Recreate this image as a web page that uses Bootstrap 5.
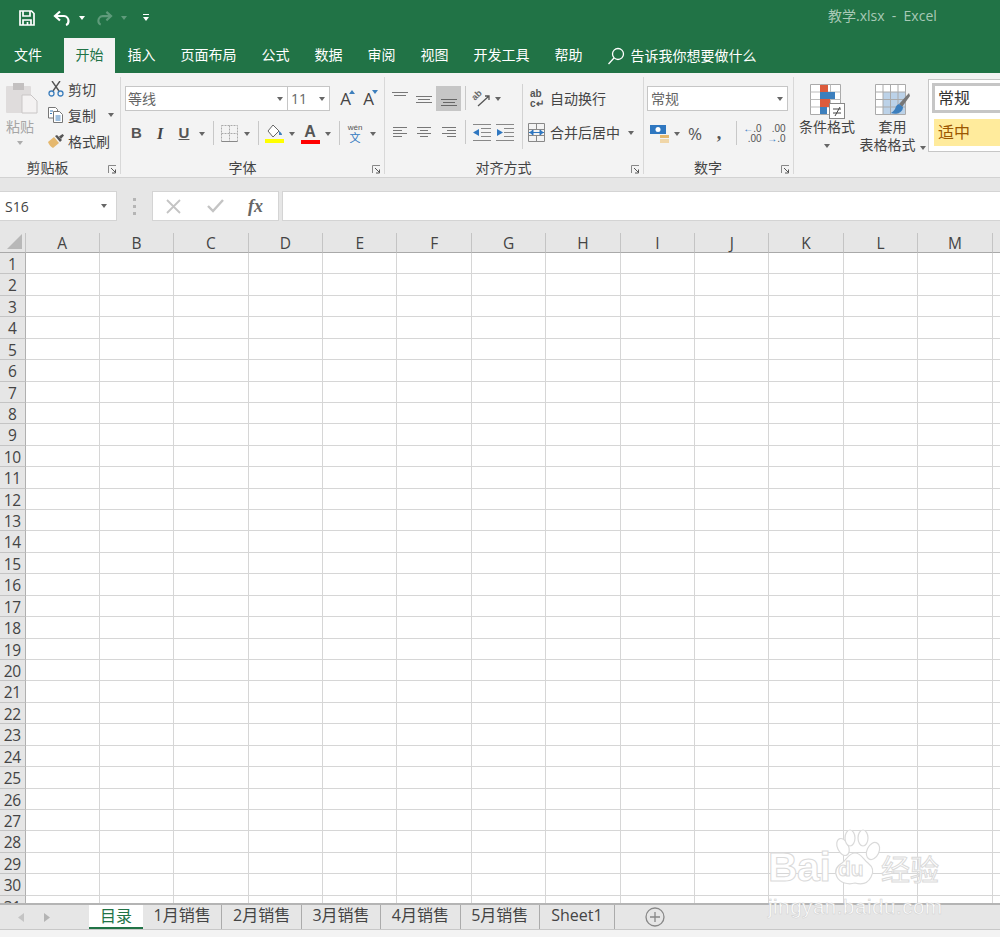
<!DOCTYPE html>
<html lang="zh-CN">
<head>
    <meta charset="UTF-8">
    <title>教学.xlsx - Excel</title>
    <link href="https://cdn.jsdelivr.net/npm/bootstrap@5.3.3/dist/css/bootstrap.min.css" rel="stylesheet">
    <style>
        html, body { margin: 0; height: 937px; overflow: hidden; }
        body { font-family: "Open Sans", "Noto Sans CJK SC", sans-serif; font-size: 14px; color: #444; background: #f3f3f3; position: relative; }
        svg { display: block; flex: none; }

        /* title and tabs */
        .title-bar { height: 38px; background: #217346; color: #fff; padding-bottom: 3px; }
        .qat-gap-1 { margin-left: 19px; }
        .qat-gap-2 { margin-left: 18px; }
        .qat-gap-3 { margin-left: 11px; }
        .qat-gap-4 { margin-left: 16px; }
        .doc-name { margin-left: 679px; margin-bottom: 4px; color: #a8c9b6; font-size: 14px; white-space: pre; }
        .tab-bar { height: 35px; background: #217346; color: #fff; padding-left: 1.5px; }
        .rtab { padding: 0 12.5px; line-height: 34px; white-space: nowrap; }
        .rtab-on { background: #f3f3f3; color: #217346; margin-left: 9.5px; padding: 0 11.5px; }
        .tell-me { margin-left: -1px; gap: 6px; }

        /* ribbon */
        .ribbon { height: 105px; background: #f3f3f3; border-bottom: 1px solid #d2d2d2; }
        .rgroup { position: relative; flex: none; display: flex; flex-direction: column; }
        .rgroup::after { content: ""; position: absolute; right: 0; top: 4px; bottom: 3px; width: 1px; background: #d8d8d8; }
        .g-clip { width: 121px; }
        .g-font { width: 264px; padding-left: 4px; }
        .g-align { width: 259px; padding-left: 3px; }
        .g-num { width: 150px; padding-left: 3px; }
        .g-style { width: 206px; }
        .g-style::after { display: none; }
        .rbody { height: 86px; padding-top: 13px; }
        .rlabel { height: 18px; line-height: 18px; text-align: center; color: #444; padding-right: 25px; }
        .g-clip .rlabel { padding-right: 26px; }
        .launcher { position: absolute; right: 4px; bottom: 3px; }
        .drop-tri { display: inline-block; width: 0; height: 0; border-left: 3.5px solid transparent; border-right: 3.5px solid transparent; border-top: 4px solid #666; }
        .drop-white { border-top-color: #fff; }
        .rcell { display: flex; align-items: center; justify-content: center; height: 25px; }
        .vline { width: 1px; height: 24px; background: #c8c8c8; justify-self: center; }

        .paste-btn { width: 40px; margin-top: -4px; color: #a6a6a6; }
        .paste-btn svg { margin-left: 3px; }
        .paste-word { margin-top: 3px; line-height: 20px; }
        .clip-list { margin-left: 8px; margin-top: -10px; }
        .clip-item { height: 26px; gap: 4px; white-space: nowrap; }
        .clip-arrow { margin-left: 8px; }

        .field { height: 25px; background: #fff; border: 1px solid #c6c6c6; display: flex; align-items: center; justify-content: space-between; padding: 0 4px 0 2px; color: #666; }
        .f-name { width: 163px; }
        .f-size { width: 43px; padding-left: 3px; margin-left: -1px; }
        .f-num { width: 141px; padding-left: 3px; }
        .grow-a { width: 23px; position: relative; font-size: 17px; text-align: center; line-height: 25px; }
        .grow-a svg { position: absolute; right: 2px; top: 4px; }
        .row-two { margin-top: 10px; }
        .font-tools { display: grid; grid-template-columns: 23px 24px 24px 12px 10px 23px 12px 10px 23px 12px 24px 12px 10px 22px 14px; }
        .tool-b { font-family: "Liberation Sans", sans-serif; font-size: 15px; font-weight: 700; color: #555; }
        .tool-i { font-family: "Liberation Serif", serif; font-style: italic; font-size: 16px; font-weight: 700; }
        .tool-u { text-decoration: underline; }
        .wen-mark { color: #555; }
        .wen-top { font-size: 8px; line-height: 9px; font-family: "Liberation Sans", sans-serif; }
        .wen-zi { font-size: 11px; line-height: 12px; color: #2f77c0; }

        .align-left { width: 134px; }
        .align-tools { display: grid; grid-template-columns: 24px 24px 25px 8px 24px 10px; }
        .align-tools-low { display: grid; grid-template-columns: 24px 24px 25px 8px 24px 24px; margin-top: 9px; }
        .align-on { background: #c6c6c6; }
        .align-sep { width: 1px; height: 65px; background: #d2d2d2; margin: -2px 5px 0 0; }
        .align-wide { white-space: nowrap; height: 25px; }
        .wrap-line { gap: 4px; padding-left: 2px; }
        .merge-line { gap: 5px; margin-top: 9px; }
        .merge-line .drop-tri { margin-left: 3px; }
        .wrap-mark { width: 16px; font-size: 10px; line-height: 10px; color: #555; font-weight: 600; font-family: "Liberation Sans", sans-serif; }
        .slant-ab { font-family: "Liberation Sans", sans-serif; font-size: 9px; font-weight: 700; fill: #666; }

        .num-tools { display: grid; grid-template-columns: 24px 12px 24px 24px 10px 23px 25px; }
        .num-pct { font-size: 17px; color: #555; }
        .num-comma { font-size: 18px; font-weight: 700; color: #555; font-family: "Liberation Serif", serif; }
        .dec-mark { font-size: 10px; line-height: 10px; color: #555; font-family: "Liberation Sans", sans-serif; text-align: right; white-space: nowrap; }
        .dec-arrow { color: #2f77c0; }

        .big-btn { line-height: 18px; white-space: nowrap; }
        .big-one { width: 58px; }
        .big-two { width: 67px; margin-left: 3px; }
        .big-icon { height: 34px; margin-top: -2px; }
        .style-box { width: 72px; height: 73px; margin-left: 2px; margin-top: -7px; border: 1px solid #c6c6c6; border-right: 0; background: #fff; padding: 3px 0 0 3px; font-size: 16px; }
        .style-cell { height: 30px; border: 3px solid #c6c6c6; border-right: 0; background: #fff; padding-left: 3px; line-height: 24px; color: #333; white-space: nowrap; }
        .style-mid { height: 27px; margin: 6px 0 0 2px; background: #ffeb9c; color: #9c5700; padding-left: 4px; line-height: 27px; white-space: nowrap; }

        /* formula bar */
        .gap-band { height: 12px; background: #e6e6e6; }
        .formula-bar { height: 43px; background: #e6e6e6; padding-top: 1px; }
        .formula-bar > div { height: 30px; background: #fff; border: 1px solid #d4d4d4; }
        .name-box { width: 117px; padding: 0 9px 0 5px; border-left: 0 !important; }
        .formula-bar > .fx-grip { width: 35px; background: transparent; border: 0; }
        .fx-grip span { width: 3px; height: 3px; background: #b5b5b5; display: block; margin: 2px 0; }
        .fx-btns { width: 127px; padding-left: 13px; }
        .fx-ok { margin-left: 26px; }
        .fx-mark { margin-left: 24px; font-family: "Liberation Serif", serif; font-style: italic; font-weight: 700; font-size: 18px; color: #666; }
        .fx-input { margin-left: 3px; flex: 1; border-right: 0 !important; }

        /* sheet */
        .sheet { display: grid; grid-template-columns: 25.5px repeat(13, 74.4px) 8px; grid-template-rows: 20px repeat(31, 21.43px); height: 670px; overflow: hidden; background: #fff; font-size: 15.5px; }
        .sheet div { border-right: 1px solid #d6d6d6; border-bottom: 1px solid #d6d6d6; }
        .sheet .head-c { background: #e6e6e6; border-right-color: #c4c4c4; border-bottom-color: #a9a9a9; text-align: center; padding-top: 2px; line-height: 17px; color: #444; }
        .sheet .head-r { background: #e6e6e6; border-right-color: #b0b0b0; border-bottom-color: #c4c4c4; text-align: center; padding-top: 3px; line-height: 17px; color: #444; letter-spacing: -.3px; }
        .sheet .corner { background: #e6e6e6; border-right-color: #c4c4c4; border-bottom-color: #a9a9a9; display: flex; align-items: flex-end; justify-content: flex-end; padding: 0 3px 3px 0; }

        /* sheet tabs */
        .sheet-bar { height: 27px; background: #e6e6e6; border-top: 2px solid #b4b4b4; border-bottom: 1px solid #c8c8c8; font-size: 16px; }
        .sheet-nav { width: 89px; gap: 20px; padding-left: 18px; }
        .stab { height: 24px; line-height: 20px; text-align: center; border-right: 1px solid #ababab; white-space: nowrap; }
        .stab-on { width: 54px; background: #fff; color: #217346; border-bottom: 2px solid #217346; border-right: 0; line-height: 22px; }
        .stab-m { width: 79.4px; }
        .stab-last { width: 75px; }
        .add-sheet { margin-left: 30px; margin-top: 2px; }

        /* watermark */
        .wm { position: absolute; left: 768px; top: 829px; width: 180px; height: 86px; color: #fff; pointer-events: none; -webkit-text-stroke: 1px #dadada; font-family: "Liberation Sans", sans-serif; }
        .wm-top { height: 58px; }
        .wm-bai { font-size: 41px; font-weight: 700; line-height: 38px; width: 61px; letter-spacing: -.5px; white-space: nowrap; margin-top: 19px; }
        .wm-paw { margin-left: -3px; position: relative; }
        .wm-du { position: absolute; left: 12px; top: 29px; font-size: 21px; line-height: 22px; font-weight: 700; }
        .wm-jy { font-family: "Noto Sans CJK SC", sans-serif; font-size: 29px; line-height: 34px; margin-top: 22px; margin-left: -1px; white-space: nowrap; }
        .wm-url { font-size: 20.5px; line-height: 24px; margin-top: 8px; white-space: nowrap; letter-spacing: .55px; -webkit-text-stroke: .5px #cfcfcf; }
    </style>
</head>
<body>

<div class="title-bar d-flex align-items-center">
    <svg class="qat-gap-1" width="16" height="16" viewBox="0 0 16 16" fill="none" stroke="#fff" stroke-width="1.7"><path d="M1 1h11.5L15 3.5V15H1z"/><path d="M4 1v5h7V1M4 15v-5h8v5"/><path d="M8.5 12v3"/></svg>
    <svg class="qat-gap-2" width="18" height="16" viewBox="0 0 18 16" fill="none" stroke="#fff" stroke-width="2.2"><path d="M7 1.5 2 6l5 4.5"/><path d="M2.5 6H11a5 5 0 0 1 4.5 5c0 2-1 3.5-2.5 4"/></svg>
    <span class="drop-tri drop-white ms-2"></span>
    <svg class="qat-gap-3" width="17" height="16" viewBox="0 0 18 16" fill="none" stroke="#5f9b7b" stroke-width="2.2"><path d="M11 1.5 16 6l-5 4.5"/><path d="M15.5 6H7a5 5 0 0 0-4.5 5c0 2 1 3.5 2.500 4"/></svg>
    <svg class="ms-2" width="6" height="4" viewBox="0 0 6 4"><path d="M0 0h6L3 4z" fill="#5f9b7b"/></svg>
    <svg class="qat-gap-4" width="6" height="8" viewBox="0 0 6 8"><path d="M0 0h6v1H0zM0 3h6L3 7z" fill="#fff"/></svg>
    <span class="doc-name">教学.xlsx  -  Excel</span>
</div>

<div class="tab-bar d-flex">
    <div class="rtab">文件</div>
    <div class="rtab rtab-on">开始</div>
    <div class="rtab">插入</div>
    <div class="rtab">页面布局</div>
    <div class="rtab">公式</div>
    <div class="rtab">数据</div>
    <div class="rtab">审阅</div>
    <div class="rtab">视图</div>
    <div class="rtab">开发工具</div>
    <div class="rtab">帮助</div>
    <div class="rtab tell-me d-flex align-items-center">
        <svg width="18" height="18" viewBox="0 0 18 18" fill="none" stroke="#fff" stroke-width="1.3"><circle cx="11" cy="7" r="5.5"/><path d="M7 11 1.5 17"/></svg>
        <span>告诉我你想要做什么</span>
    </div>
</div>

<div class="ribbon d-flex">
    <!-- clipboard -->
    <div class="rgroup g-clip">
        <div class="rbody d-flex">
            <div class="paste-btn d-flex flex-column align-items-center">
                <svg width="33" height="32" viewBox="0 0 33 32"><rect x="1" y="4" width="25" height="27" rx="1" fill="#dfdcdc"/><rect x="8" y="1" width="11" height="7" fill="#c3c0c0"/><path d="M17 13h9l6 6v12H17z" fill="#f4f2f2" stroke="#c9c6c6"/></svg>
                <div class="paste-word">粘贴</div>
                <span class="drop-tri mt-1 opacity-50"></span>
            </div>
            <div class="clip-list">
                <div class="clip-item d-flex align-items-center">
                    <svg width="16" height="16" viewBox="0 0 16 16" fill="none"><path d="M4 0l7 10M12 0 5 10" stroke="#555" stroke-width="1.4"/><circle cx="3.5" cy="12.5" r="2.5" stroke="#3d7fbd" stroke-width="1.3"/><circle cx="12.5" cy="12.5" r="2.5" stroke="#3d7fbd" stroke-width="1.3"/></svg>
                    <span>剪切</span>
                </div>
                <div class="clip-item d-flex align-items-center">
                    <svg width="16" height="16" viewBox="0 0 16 16" fill="#fff" stroke="#777"><path d="M.5.5h7l2 2V11H.5z"/><path d="M5.500 4.500h6l3 3v8h-9z"/><path d="M2 4h3M2 6.500h2M7.500 9h5M7.500 11h5M7.500 13h5" stroke="#3d7fbd"/></svg>
                    <span>复制</span>
                    <span class="drop-tri clip-arrow"></span>
                </div>
                <div class="clip-item d-flex align-items-center">
                    <svg width="16" height="14" viewBox="0 0 16 14"><path d="M0 8l6-5 5 6-6 5C3 13 1 11 0 8z" fill="#e5b86e"/><path d="M7 2l2-1 5 5-2 2z" fill="#555"/><path d="M11 2.500 14.500 0 16 1.500 13 5z" fill="#555"/></svg>
                    <span>格式刷</span>
                </div>
            </div>
        </div>
        <div class="rlabel">剪贴板</div>
        <svg class="launcher" width="9" height="9" viewBox="0 0 9 9" fill="none" stroke="#888"><path d="M.5 8V.5H8"/><path d="M3 3l4 4M7.500 4.500v3.500h-3.500" stroke="#555"/></svg>
    </div>

    <!-- font -->
    <div class="rgroup g-font">
        <div class="rbody">
            <div class="d-flex">
                <div class="field f-name"><span>等线</span><span class="drop-tri"></span></div>
                <div class="field f-size"><span>11</span><span class="drop-tri"></span></div>
                <div class="grow-a ms-1">A<svg width="6" height="4" viewBox="0 0 6 4"><path d="M0 4h6L3 0z" fill="#3d7fbd"/></svg></div>
                <div class="grow-a">A<svg width="6" height="4" viewBox="0 0 6 4"><path d="M0 0h6L3 4z" fill="#3d7fbd"/></svg></div>
            </div>
            <div class="font-tools row-two">
                <div class="rcell tool-b">B</div>
                <div class="rcell tool-i">I</div>
                <div class="rcell tool-b tool-u">U</div>
                <div class="rcell"><span class="drop-tri"></span></div>
                <div class="vline"></div>
                <div class="rcell"><svg width="17" height="17" viewBox="0 0 17 17" fill="none" stroke="#aaa"><path d="M.5.5h16v16H.5zM8.500.5v16M.5 8.500h16" stroke-dasharray="2 1"/><path d="M.5 16.500h16" stroke="#888"/></svg></div>
                <div class="rcell"><span class="drop-tri"></span></div>
                <div class="vline"></div>
                <div class="rcell"><svg width="19" height="19" viewBox="0 0 19 19"><path d="M8 1 3 7l5 6 6-6z" fill="#fff" stroke="#666"/><path d="M14 7c2 1 3 3 3 4h-3z" fill="#3d7fbd"/><rect y="15" width="19" height="4" fill="#ffff00"/></svg></div>
                <div class="rcell"><span class="drop-tri"></span></div>
                <div class="rcell"><div class="d-flex flex-column align-items-center"><span class="tool-b lh-1 fs-6">A</span><svg width="19" height="4" viewBox="0 0 19 4"><rect width="19" height="4" fill="#ff0000"/></svg></div></div>
                <div class="rcell"><span class="drop-tri"></span></div>
                <div class="vline"></div>
                <div class="rcell"><div class="wen-mark text-center"><div class="wen-top">wén</div><div class="wen-zi">文</div></div></div>
                <div class="rcell"><span class="drop-tri"></span></div>
            </div>
        </div>
        <div class="rlabel">字体</div>
        <svg class="launcher" width="9" height="9" viewBox="0 0 9 9" fill="none" stroke="#888"><path d="M.5 8V.5H8"/><path d="M3 3l4 4M7.500 4.500v3.500h-3.500" stroke="#555"/></svg>
    </div>

    <!-- alignment -->
    <div class="rgroup g-align">
        <div class="rbody d-flex">
            <div class="align-left">
                <div class="align-tools">
                    <div class="rcell"><svg width="18" height="17" viewBox="0 0 18 17" stroke="#777"><path d="M1 2.500h16M3 5.500h12"/></svg></div>
                    <div class="rcell"><svg width="18" height="17" viewBox="0 0 18 17" stroke="#777"><path d="M1 6.500h16M3 9.500h12M1 12.500h16"/></svg></div>
                    <div class="rcell align-on"><svg width="18" height="17" viewBox="0 0 18 17" stroke="#666"><path d="M1 9.500h16M3 12.500h12M1 15.500h16"/></svg></div>
                    <div class="vline"></div>
                    <div class="rcell"><svg width="19" height="17" viewBox="0 0 19 17" fill="none"><text class="slant-ab" transform="translate(3 11) rotate(-45)">ab</text><path d="M6 16 17 6M13 6h4v4" stroke="#555" stroke-width="1.3"/></svg></div>
                    <div class="rcell"><span class="drop-tri"></span></div>
                </div>
                <div class="align-tools-low">
                    <div class="rcell"><svg width="18" height="17" viewBox="0 0 18 17" stroke="#777"><path d="M2 3.500h14M2 6.500h9M2 9.500h14M2 12.500h9"/></svg></div>
                    <div class="rcell"><svg width="18" height="17" viewBox="0 0 18 17" stroke="#777"><path d="M2 3.500h14M5 6.500h8M2 9.500h14M5 12.500h8"/></svg></div>
                    <div class="rcell"><svg width="18" height="17" viewBox="0 0 18 17" stroke="#777"><path d="M2 3.500h14M7 6.500h9M2 9.500h14M7 12.500h9"/></svg></div>
                    <div class="vline"></div>
                    <div class="rcell"><svg width="19" height="18" viewBox="0 0 19 18" stroke="#888"><path d="M1 .5h18M9 4.500h10M9 8.500h10M9 12.500h10M1 16.500h18"/><path d="M7 5v7L1 8.500z" fill="#2f77c0" stroke="none"/></svg></div>
                    <div class="rcell"><svg width="19" height="18" viewBox="0 0 19 18" stroke="#888"><path d="M0 .5h18M8 4.500h10M8 8.500h10M8 12.500h10M0 16.500h18"/><path d="M1 5v7l6-3.500z" fill="#2f77c0" stroke="none"/></svg></div>
                </div>
            </div>
            <div class="align-sep"></div>
            <div>
                <div class="align-wide wrap-line d-flex align-items-center">
                    <div class="wrap-mark"><div>ab</div><div>c↵</div></div>
                    <span>自动换行</span>
                </div>
                <div class="align-wide merge-line d-flex align-items-center">
                    <svg width="17" height="19" viewBox="0 0 17 19" fill="none" stroke="#888"><path d="M.5.5h16v18H.5zM.5 6.500h16M.5 12.500h16M8.500.5v6M8.500 12.500v6"/><path d="M1 9.500h15M2 9.500l3-2.500v5zM15 9.500 12 7v5z" fill="#2f77c0" stroke="#2f77c0"/></svg>
                    <span>合并后居中</span>
                    <span class="drop-tri"></span>
                </div>
            </div>
        </div>
        <div class="rlabel">对齐方式</div>
        <svg class="launcher" width="9" height="9" viewBox="0 0 9 9" fill="none" stroke="#888"><path d="M.5 8V.5H8"/><path d="M3 3l4 4M7.500 4.500v3.500h-3.500" stroke="#555"/></svg>
    </div>

    <!-- number -->
    <div class="rgroup g-num">
        <div class="rbody">
            <div class="field f-num"><span>常规</span><span class="drop-tri"></span></div>
            <div class="num-tools row-two">
                <div class="rcell"><svg width="20" height="20" viewBox="0 0 20 20"><rect x="1" y="1" width="16" height="9" fill="#2f77c0"/><circle cx="9" cy="5.500" r="2.500" fill="#fff"/><rect x="11" y="11" width="9" height="3" fill="#e5b86e"/><rect x="11" y="15" width="9" height="4" fill="#f0d6a8"/></svg></div>
                <div class="rcell"><span class="drop-tri"></span></div>
                <div class="rcell num-pct">%</div>
                <div class="rcell num-comma">,</div>
                <div class="vline"></div>
                <div class="rcell"><div class="dec-mark"><div><b class="dec-arrow">←</b>.0</div><div>.00</div></div></div>
                <div class="rcell"><div class="dec-mark"><div>.00</div><div><b class="dec-arrow">→</b>.0</div></div></div>
            </div>
        </div>
        <div class="rlabel">数字</div>
        <svg class="launcher" width="9" height="9" viewBox="0 0 9 9" fill="none" stroke="#888"><path d="M.5 8V.5H8"/><path d="M3 3l4 4M7.500 4.500v3.500h-3.500" stroke="#555"/></svg>
    </div>

    <!-- styles -->
    <div class="rgroup g-style">
        <div class="rbody d-flex ps-1">
            <div class="big-btn big-one d-flex flex-column align-items-center">
                <div class="big-icon"><svg width="35" height="35" viewBox="0 0 35 35"><path d="M.5.5h30v30H.5z" fill="#fff" stroke="#aaa"/><path d="M.5 8h30M.5 15.500h30M.5 23h30M10.500.5v30M20.500.5v30" stroke="#bbb"/><rect x="10" y="1" width="8" height="7" fill="#dc5b3c"/><rect x="10" y="8" width="15" height="7" fill="#3d7fbd"/><rect x="10" y="15" width="10" height="8" fill="#dc5b3c"/><rect x="10" y="23" width="7" height="7" fill="#3d7fbd"/><rect x="19.500" y="19.500" width="15" height="15" fill="#fff" stroke="#888"/><path d="M23 25h8M23 29h8M30 23l-5 9" stroke="#444" fill="none"/></svg></div>
                <div>条件格式</div>
                <span class="drop-tri mt-2"></span>
            </div>
            <div class="big-btn big-two d-flex flex-column align-items-center">
                <div class="big-icon"><svg width="35" height="35" viewBox="0 0 35 35"><path d="M.5.5h30v30H.5z" fill="#fff" stroke="#aaa"/><rect x="8" y="8" width="22" height="22" fill="#bcd2e8"/><path d="M.5 8h30M.5 15.500h30M.5 23h30M8 .5v30M15.500.5v30M23 .5v30" stroke="#aaa"/><path d="M34 9 24 20l3 3 8-11z" fill="#777"/><path d="M24 20c-3 1-3 3-4 5-1 2-3 3-4 4 5 2 12 0 12-6z" fill="#3d7fbd"/></svg></div>
                <div>套用</div>
                <div class="text-nowrap">表格格式<span class="drop-tri ms-1"></span></div>
            </div>
            <div class="style-box">
                <div class="style-cell">常规</div>
                <div class="style-mid">适中</div>
            </div>
        </div>
    </div>
</div>

<div class="gap-band"></div>

<div class="formula-bar d-flex">
    <div class="name-box d-flex align-items-center justify-content-between"><span>S16</span><span class="drop-tri"></span></div>
    <div class="fx-grip d-flex flex-column align-items-center justify-content-center"><span></span><span></span><span></span></div>
    <div class="fx-btns d-flex align-items-center">
        <svg width="15" height="15" viewBox="0 0 15 15" stroke="#c4c4c4" stroke-width="1.8"><path d="M1 1l13 13M14 1 1 14"/></svg>
        <svg class="fx-ok" width="17" height="14" viewBox="0 0 17 14" fill="none" stroke="#c4c4c4" stroke-width="2.4"><path d="M1 7l5 5L16 1"/></svg>
        <span class="fx-mark">fx</span>
    </div>
    <div class="fx-input"></div>
</div>

<div class="sheet" id="sheet"></div>

<div class="sheet-bar d-flex">
    <div class="sheet-nav d-flex align-items-center">
        <svg width="6" height="9" viewBox="0 0 6 9"><path d="M6 0v9L0 4.500z" fill="#c4c4c4"/></svg>
        <svg width="6" height="9" viewBox="0 0 6 9"><path d="M0 0v9l6-4.500z" fill="#b4b4b4"/></svg>
    </div>
    <div class="stab stab-on">目录</div>
    <div class="stab stab-m">1月销售</div>
    <div class="stab stab-m">2月销售</div>
    <div class="stab stab-m">3月销售</div>
    <div class="stab stab-m">4月销售</div>
    <div class="stab stab-m">5月销售</div>
    <div class="stab stab-last">Sheet1</div>
    <svg class="add-sheet" width="20" height="20" viewBox="0 0 20 20" fill="none" stroke="#888" stroke-width="1.3"><circle cx="10" cy="10" r="9"/><path d="M10 5v10M5 10h10"/></svg>
</div>

<div class="wm">
    <div class="wm-top d-flex">
        <div class="wm-bai">Bai</div>
        <div class="wm-paw">
            <svg width="56" height="58" viewBox="0 0 56 58" fill="#fff" stroke="#dadada" stroke-width="1.2"><ellipse cx="17" cy="18" rx="5.5" ry="9" transform="rotate(-25 17 18)"/><ellipse cx="24" cy="9" rx="5" ry="8"/><ellipse cx="37" cy="9" rx="5" ry="8"/><ellipse cx="47" cy="22" rx="6" ry="9" transform="rotate(25 47 22)"/><path d="M29 24c6 0 8 6 13 10 5 4 6 9 3 14-3 6-9 8-16 6-7 2-15 0-18-6-3-6 0-11 5-14 5-4 7-10 13-10z"/></svg>
            <span class="wm-du">du</span>
        </div>
        <div class="wm-jy">经验</div>
    </div>
    <div class="wm-url">jingyan.baidu.com</div>
</div>

<script>
    // column headers and rows of the sheet
    const sheet = document.getElementById("sheet");
    const letters = "ABCDEFGHIJKLM";
    let html = '<div class="corner"><svg width="15" height="15" viewBox="0 0 15 15"><path d="M15 0v15H0z" fill="#b8b8b8"/></svg></div>';
    for (const l of letters) {
        html += `<div class="head-c">${l}</div>`;
    }
    html += '<div class="head-c"></div>';
    for (let r = 1; r <= 31; r++) {
        html += `<div class="head-r">${r}</div>`;
        for (let c = 0; c < 14; c++) {
            html += "<div></div>";
        }
    }
    sheet.innerHTML = html;
</script>
<script src="https://cdn.jsdelivr.net/npm/bootstrap@5.3.3/dist/js/bootstrap.bundle.min.js"></script>
</body>
</html>
